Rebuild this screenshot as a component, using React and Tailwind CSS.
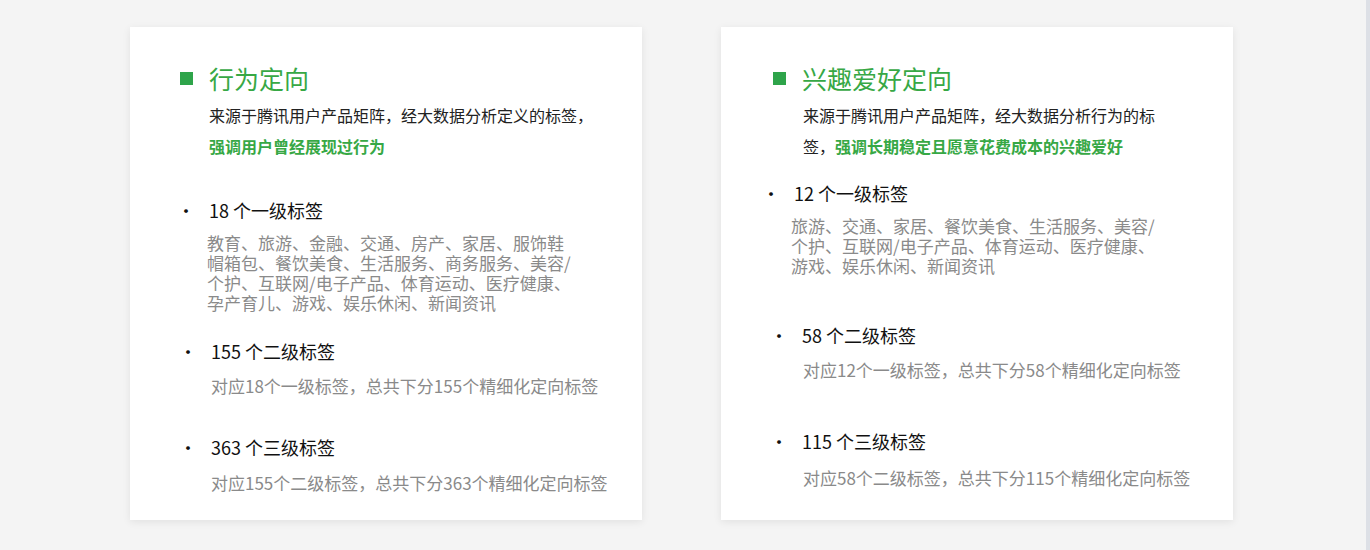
import React from "react";

const font = { fontFamily: '"Noto Sans CJK SC", "Noto Sans", sans-serif' };

const cards = [
  {
    title: "行为定向",
    pad: "pl-[50px]",
    textPad: "pl-[29px]",
    descW: "w-[412px]",
    strongBlock: "block",
    desc: "来源于腾讯用户产品矩阵，经大数据分析定义的标签，",
    strong: "强调用户曾经展现过行为",
    items: [
      { head: "18 个一级标签", mt: "mt-[34px]", gmt: "mt-[9px]", bx: "", gx: "-ml-[2px]", gw: "w-[368px]",
        body: "教育、旅游、金融、交通、房产、家居、服饰鞋帽箱包、餐饮美食、生活服务、商务服务、美容/个护、互联网/电子产品、体育运动、医疗健康、孕产育儿、游戏、娱乐休闲、新闻资讯" },
      { head: "155 个二级标签", mt: "mt-[24px]", gmt: "mt-[11px]", bx: "ml-[2px]", gx: "ml-[2px]", gw: "whitespace-nowrap",
        body: "对应18个一级标签，总共下分155个精细化定向标签" },
      { head: "363 个三级标签", mt: "mt-[37px]", gmt: "mt-[12px]", bx: "ml-[2px]", gx: "ml-[2px]", gw: "whitespace-nowrap",
        body: "对应155个二级标签，总共下分363个精细化定向标签" },
    ],
  },
  {
    title: "兴趣爱好定向",
    pad: "pl-[52px]",
    textPad: "pl-[30px]",
    descW: "w-[382px]",
    strongBlock: "",
    desc: "来源于腾讯用户产品矩阵，经大数据分析行为的标签，",
    strong: "强调长期稳定且愿意花费成本的兴趣爱好",
    items: [
      { head: "12 个一级标签", mt: "mt-[17px]", gmt: "mt-[9px]", bx: "-ml-[8px]", gx: "-ml-[12px]", gw: "w-[368px]",
        body: "旅游、交通、家居、餐饮美食、生活服务、美容/个护、互联网/电子产品、体育运动、医疗健康、游戏、娱乐休闲、新闻资讯" },
      { head: "58 个二级标签", mt: "mt-[45px]", gmt: "mt-[11px]", bx: "", gx: "", gw: "whitespace-nowrap",
        body: "对应12个一级标签，总共下分58个精细化定向标签" },
      { head: "115 个三级标签", mt: "mt-[47px]", gmt: "mt-[13px]", bx: "", gx: "", gw: "whitespace-nowrap",
        body: "对应58个二级标签，总共下分115个精细化定向标签" },
    ],
  },
];

function Card({ c }) {
  return (
    <div className={`w-[512px] h-[493px] bg-white shadow-[0_2px_8px_rgba(0,0,0,0.08)] pt-[35px] ${c.pad}`}>
      <div className="flex items-center h-[32px]">
        <span className="w-[13px] h-[13px] bg-[#2ea44a]" />
        <span className="ml-[16px] text-[25px] text-[#37a845] leading-[32px]">{c.title}</span>
      </div>
      <div className={`${c.textPad} mt-[6px]`}>
        <p className={`${c.descW} text-[16px] leading-[31px] text-[#222]`}>
          {c.desc}
          <b className={`${c.strongBlock} text-[#37a845] font-bold`}>{c.strong}</b>
        </p>
      </div>
      {c.items.map((it) => (
        <div key={it.head} className={it.mt}>
          <div className={`flex items-center h-[28px] ${it.bx}`}>
            <span className="w-[29px] text-[18px] text-[#111] -ml-[3px]">•</span>
            <span className="text-[18px] text-[#111] leading-[28px] ml-[3px]">{it.head}</span>
          </div>
          <p className={`${c.textPad} ${it.gmt} ${it.gx}`}>
            <span className={`block ${it.gw} text-[17px] leading-[20px] text-[#8a8a8a]`}>{it.body}</span>
          </p>
        </div>
      ))}
    </div>
  );
}

export default function App() {
  return (
    <div style={font} className="w-[1370px] h-[550px] bg-[#f4f4f4] flex border-r-[4px] border-[#dde0e6] box-border">
      <div className="flex gap-[79px] pl-[130px] pt-[27px]">
        {cards.map((c) => (
          <Card key={c.title} c={c} />
        ))}
      </div>
    </div>
  );
}
